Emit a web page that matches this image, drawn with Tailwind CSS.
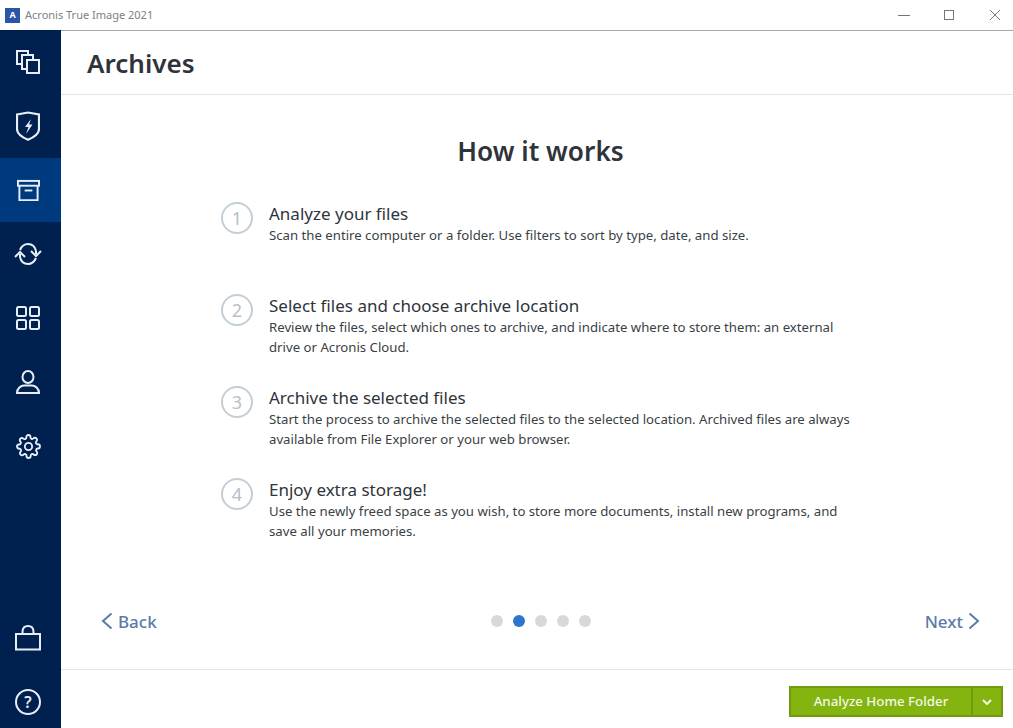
<!DOCTYPE html>
<html lang="en">
<head>
  <meta charset="UTF-8" />
  <title>Acronis True Image 2021</title>
  <script src="https://cdn.jsdelivr.net/npm/@tailwindcss/browser@4"></script>
</head>
<body class="bg-white font-['Noto_Sans',sans-serif] overflow-hidden">
<div class="w-[1013px] h-[728px] flex flex-col">

  <!-- Title bar -->
  <div class="h-[30px] shrink-0 flex items-center pl-[5px] bg-white">
    <div class="w-[15px] h-[15px] bg-[#2b55a8] flex items-center justify-center text-white text-[9px] font-bold">A</div>
    <span class="ml-[5px] text-[11px] text-[#808080]">Acronis True Image 2021</span>
    <div class="ml-auto flex items-center">
      <svg class="w-[46px] h-[14px]" viewBox="0 0 46 14" fill="none" stroke="#777" stroke-width="1"><path d="M18 7.500h12"/></svg>
      <svg class="w-[46px] h-[14px]" viewBox="0 0 46 14" fill="none" stroke="#777" stroke-width="1"><rect x="18.500" y="2.500" width="9" height="9"/></svg>
      <svg class="w-[41px] h-[14px]" viewBox="0 0 41 14" fill="none" stroke="#777" stroke-width="1"><path d="M18 2l10 10M28 2L18 12"/></svg>
    </div>
  </div>

  <div class="flex flex-1 min-h-0">
    <!-- Sidebar -->
    <aside class="w-[61px] shrink-0 bg-[#002050] flex flex-col overflow-hidden pr-[5px] relative">
      <div class="h-[64px] flex items-center justify-center">
        <svg class="w-[24px] h-[24px]" viewBox="0 0 24 24" fill="none" stroke="#e8eef6" stroke-width="2"><path d="M6 14H1V1h11v4"/><path d="M11 19H6V5h11v5"/><rect x="11" y="10" width="12" height="13"/></svg>
      </div>
      <div class="h-[64px] flex items-center justify-center">
        <svg class="w-[24px] h-[30px]" viewBox="0 0 24 30" fill="none" stroke="#e8eef6" stroke-width="2.200"><path d="M1 3.500L12 1.500l11 2V18c0 5-5.500 8.500-11 10.800C6.500 26.500 1 23 1 18z"/><path d="M15 8l-6 8h3.500l-2.500 7 6.500-9.500H13l2-5.500z" fill="#e8eef6" stroke="none"/></svg>
      </div>
      <div class="h-[64px] flex items-center justify-center bg-[#003a7e] -mr-[5px] pr-[5px]">
        <svg class="w-[23px] h-[23px]" viewBox="0 0 24 24" fill="none" stroke="#e8eef6" stroke-width="2"><rect x="1" y="2" width="22" height="5"/><path d="M2.500 7v15h19V7"/><path d="M8 12h8"/></svg>
      </div>
      <div class="h-[64px] flex items-center justify-center">
        <svg class="w-[28px] h-[24px]" viewBox="0 0 28 24" fill="none" stroke="#e8eef6" stroke-width="2"><path d="M6 8c1.500-3.500 4.500-6 8-6 3.800 0 7 2.500 8 7v3"/><path d="M22 16c-1.500 3.500-4.500 6-8 6-3.800 0-7-2.500-8-7v-3"/><path d="M17 9l5 5 5-5"/><path d="M1 15l5-5 5 5"/></svg>
      </div>
      <div class="h-[64px] flex items-center justify-center">
        <svg class="w-[24px] h-[24px]" viewBox="0 0 24 24" fill="none" stroke="#e8eef6" stroke-width="2"><rect x="1" y="1" width="9" height="9" rx="1.500"/><rect x="14" y="1" width="9" height="9" rx="1.500"/><rect x="1" y="14" width="9" height="9" rx="1.500"/><rect x="14" y="14" width="9" height="9" rx="1.500"/></svg>
      </div>
      <div class="h-[64px] flex items-center justify-center">
        <svg class="w-[24px] h-[24px]" viewBox="0 0 24 24" fill="none" stroke="#e8eef6" stroke-width="2"><ellipse cx="12" cy="7" rx="5.500" ry="6"/><path d="M1 23c0-4.500 4-7.500 7-7.500h8c3 0 7 3 7 7.500z"/></svg>
      </div>
      <div class="h-[64px] flex items-center justify-center">
        <svg class="w-[25px] h-[25px]" viewBox="0 0 24 24" fill="none" stroke="#e8eef6" stroke-width="1.800" stroke-linecap="round" stroke-linejoin="round"><circle cx="12" cy="12" r="3.500"/><path d="M19.400 15a1.650 1.650 0 0 0 .33 1.820l.06.06a2 2 0 1 1-2.830 2.830l-.06-.06a1.650 1.650 0 0 0-2.800 1.170V21a2 2 0 1 1-4 0v-.09a1.650 1.650 0 0 0-2.800-1.170l-.06.06a2 2 0 1 1-2.830-2.830l.06-.06a1.650 1.650 0 0 0-1.170-2.800H3a2 2 0 1 1 0-4h.09a1.650 1.650 0 0 0 1.170-2.800l-.06-.06a2 2 0 1 1 2.830-2.830l.06.06a1.650 1.650 0 0 0 2.800-1.170V3a2 2 0 1 1 4 0v.09a1.650 1.650 0 0 0 2.800 1.170l.06-.06a2 2 0 1 1 2.830 2.830l-.06.06a1.650 1.650 0 0 0 1.170 2.800H21a2 2 0 1 1 0 4h-.09a1.650 1.650 0 0 0-1.510 1.110z"/></svg>
      </div>
      <div class="mt-auto h-[64px] flex items-center justify-center shrink-0">
        <svg class="w-[26px] h-[26px]" viewBox="0 0 26 26" fill="none" stroke="#e8eef6" stroke-width="2"><rect x="1" y="9" width="24" height="15.500"/><path d="M7.500 9V7c0-3.500 2-6 5.500-6s5.500 2.500 5.500 6v2"/></svg>
      </div>
      <div class="h-[64px] -mb-[6px] flex items-center justify-center shrink-0">
        <div class="w-[26px] h-[26px] rounded-full border-2 border-[#e8eef6] flex items-center justify-center text-[#e8eef6] text-[16px] font-semibold leading-none">?</div>
      </div>
    </aside>

    <!-- Main -->
    <main class="flex-1 flex flex-col min-w-0">
      <header class="h-[65px] shrink-0 border-t border-t-[#a8a8a8] border-b border-b-[#e3e5e8] flex items-center pl-[26px]">
        <h1 class="text-[26px] font-semibold text-[#2f343b] mt-[2px]">Archives</h1>
      </header>

      <section class="flex-1 flex flex-col min-h-0">
        <h2 class="text-[26.200px] font-semibold text-[#2f343b] text-center mt-[36px] leading-[40px] pl-[7px]">How it works</h2>

        <ol class="mt-[32px] ml-[160px] w-[640px] flex flex-col">
          <li class="h-[92px] flex">
            <div class="w-[32px] h-[32px] rounded-full border-2 border-[#c3ced6] flex items-center justify-center text-[#b6c0c8] text-[18px] shrink-0 mt-[-1px]">1</div>
            <div class="ml-[16px] -mt-[2px] whitespace-nowrap">
              <div class="text-[17px] leading-[25px] text-[#2f343b]">Analyze your files</div>
              <p class="text-[13.200px] leading-[20px] text-[#3a3f45] -mt-px">Scan the entire computer or a folder. Use filters to sort by type, date, and size.</p>
            </div>
          </li>
          <li class="h-[92px] flex">
            <div class="w-[32px] h-[32px] rounded-full border-2 border-[#c3ced6] flex items-center justify-center text-[#b6c0c8] text-[18px] shrink-0 mt-[-1px]">2</div>
            <div class="ml-[16px] -mt-[2px] whitespace-nowrap">
              <div class="text-[17px] leading-[25px] text-[#2f343b]">Select files and choose archive location</div>
              <p class="text-[13.200px] leading-[20px] text-[#3a3f45] -mt-px">Review the files, select which ones to archive, and indicate where to store them: an external<br>drive or Acronis Cloud.</p>
            </div>
          </li>
          <li class="h-[92px] flex">
            <div class="w-[32px] h-[32px] rounded-full border-2 border-[#c3ced6] flex items-center justify-center text-[#b6c0c8] text-[18px] shrink-0 mt-[-1px]">3</div>
            <div class="ml-[16px] -mt-[2px] whitespace-nowrap">
              <div class="text-[17px] leading-[25px] text-[#2f343b]">Archive the selected files</div>
              <p class="text-[13.200px] leading-[20px] text-[#3a3f45] -mt-px">Start the process to archive the selected files to the selected location. Archived files are always<br>available from File Explorer or your web browser.</p>
            </div>
          </li>
          <li class="h-[92px] flex">
            <div class="w-[32px] h-[32px] rounded-full border-2 border-[#c3ced6] flex items-center justify-center text-[#b6c0c8] text-[18px] shrink-0 mt-[-1px]">4</div>
            <div class="ml-[16px] -mt-[2px] whitespace-nowrap">
              <div class="text-[17px] leading-[25px] text-[#2f343b]">Enjoy extra storage!</div>
              <p class="text-[13.200px] leading-[20px] text-[#3a3f45] -mt-px">Use the newly freed space as you wish, to store more documents, install new programs, and<br>save all your memories.</p>
            </div>
          </li>
        </ol>

        <div class="mt-auto mb-[35px] pl-[40px] pr-[33px] flex items-center justify-between text-[17px] text-[#5b7aa8] font-medium">
          <a class="flex items-center gap-[5px]">
            <svg class="w-[12px] h-[18px]" viewBox="0 0 12 18" fill="none" stroke="#5b7aa8" stroke-width="2"><path d="M10.500 1.500L2 9l8.500 7.500"/></svg>
            Back
          </a>
          <div class="flex items-center gap-[10px] ml-[1px] -mt-[1px]">
            <span class="w-[12px] h-[12px] rounded-full bg-[#d8d8d8]"></span>
            <span class="w-[12px] h-[12px] rounded-full bg-[#2f74cc]"></span>
            <span class="w-[12px] h-[12px] rounded-full bg-[#d8d8d8]"></span>
            <span class="w-[12px] h-[12px] rounded-full bg-[#d8d8d8]"></span>
            <span class="w-[12px] h-[12px] rounded-full bg-[#d8d8d8]"></span>
          </div>
          <a class="flex items-center gap-[5px]">
            Next
            <svg class="w-[12px] h-[18px]" viewBox="0 0 12 18" fill="none" stroke="#5b7aa8" stroke-width="2"><path d="M1.500 1.500L10 9l-8.500 7.500"/></svg>
          </a>
        </div>
      </section>

      <footer class="h-[59px] shrink-0 border-t border-[#e3e5e8] flex justify-end pt-[16px] pr-[10px]">
        <div class="flex h-[31px] bg-[#84b40f] border-2 border-[#6f9a12] text-[#f4f8e6] text-[13.300px]">
          <button class="w-[182px] flex items-center justify-center border-r-2 border-[#6f9a12] font-medium">Analyze Home Folder</button>
          <button class="w-[28px] flex items-center justify-center">
            <svg class="w-[10px] h-[6px]" viewBox="0 0 10 6" fill="none" stroke="#f4f8e6" stroke-width="2"><path d="M1 1l4 4 4-4"/></svg>
          </button>
        </div>
      </footer>
    </main>
  </div>
</div>
</body>
</html>
